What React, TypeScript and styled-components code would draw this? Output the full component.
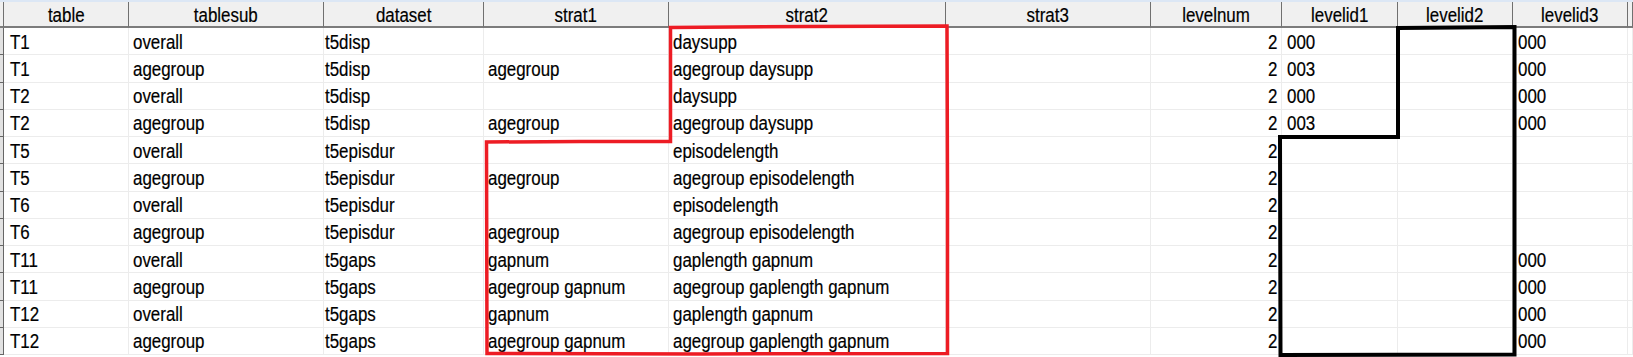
import styled, { createGlobalStyle } from "styled-components";
import { Fragment } from "react";

const GlobalStyle = createGlobalStyle`
  body {
    margin: 0;
    background: #fff;
  }
`;

const Frame = styled.div`
  position: relative;
  width: 1633px;
  height: 357px;
  overflow: hidden;
  background: #fff;
  font-family: "Liberation Sans", Arial, sans-serif;
  font-size: 20.5px;
  color: #000;
`;

const TopStrip = styled.div`
  height: 2px;
  background: #dce7f5;
`;

const Grid = styled.div`
  display: grid;
  grid-template-columns: 4px 125px 195px 160px 185px 277px 205px 131px 116px 115px 115px 1fr;
  grid-template-rows: 26px repeat(12, 27.25px);
`;

const HeaderCell = styled.div`
  box-sizing: border-box;
  background: #f0f0f0;
  border-right: 1px solid #707070;
  border-bottom: 2px solid #7c7c7c;
  padding-top: 2px;
  line-height: 22px;
  text-align: center;
  white-space: nowrap;
  overflow: hidden;
`;

const Stub = styled.div`
  box-sizing: border-box;
  background: #e2e2e2;
  border-right: 1px solid #666;
  border-bottom: 1px solid #666;
`;

const Cell = styled.div<{ $pad: number; $right?: boolean }>`
  box-sizing: border-box;
  display: flex;
  align-items: center;
  justify-content: ${(p) => (p.$right ? "flex-end" : "flex-start")};
  padding: 1px ${(p) => (p.$right ? p.$pad : 0)}px 0 ${(p) => (p.$right ? 0 : p.$pad)}px;
  border-right: 1px solid #ececec;
  border-bottom: 1px solid #ececec;
  white-space: nowrap;
  overflow: hidden;
`;

// the grid font is a narrow sans, squeeze Liberation Sans to its width
const Text = styled.span<{ $origin?: string }>`
  display: inline-block;
  transform: scaleX(0.825);
  transform-origin: ${(p) => p.$origin || "left"} center;
  -webkit-text-stroke: 0.2px #000;
`;

const Marks = styled.svg`
  position: absolute;
  left: 0;
  top: 0;
  pointer-events: none;
`;

type Col = { name: string; pad: number; right?: boolean };

const columns: Col[] = [
  { name: "table", pad: 6 },
  { name: "tablesub", pad: 4 },
  { name: "dataset", pad: 1 },
  { name: "strat1", pad: 4 },
  { name: "strat2", pad: 4 },
  { name: "strat3", pad: 4 },
  { name: "levelnum", pad: 4, right: true },
  { name: "levelid1", pad: 5 },
  { name: "levelid2", pad: 5 },
  { name: "levelid3", pad: 5 },
];

const rows: string[][] = [
  ["T1", "overall", "t5disp", "", "daysupp", "", "2", "000", "", "000"],
  ["T1", "agegroup", "t5disp", "agegroup", "agegroup daysupp", "", "2", "003", "", "000"],
  ["T2", "overall", "t5disp", "", "daysupp", "", "2", "000", "", "000"],
  ["T2", "agegroup", "t5disp", "agegroup", "agegroup daysupp", "", "2", "003", "", "000"],
  ["T5", "overall", "t5episdur", "", "episodelength", "", "2", "", "", ""],
  ["T5", "agegroup", "t5episdur", "agegroup", "agegroup episodelength", "", "2", "", "", ""],
  ["T6", "overall", "t5episdur", "", "episodelength", "", "2", "", "", ""],
  ["T6", "agegroup", "t5episdur", "agegroup", "agegroup episodelength", "", "2", "", "", ""],
  ["T11", "overall", "t5gaps", "gapnum", "gaplength gapnum", "", "2", "", "", "000"],
  ["T11", "agegroup", "t5gaps", "agegroup gapnum", "agegroup gaplength gapnum", "", "2", "", "", "000"],
  ["T12", "overall", "t5gaps", "gapnum", "gaplength gapnum", "", "2", "", "", "000"],
  ["T12", "agegroup", "t5gaps", "agegroup gapnum", "agegroup gaplength gapnum", "", "2", "", "", "000"],
];

function App() {
  return (
    <Frame>
      <GlobalStyle />
      <TopStrip />
      <Grid>
        <HeaderCell />
        {columns.map((c) => (
          <HeaderCell key={c.name}>
            <Text $origin="center">{c.name}</Text>
          </HeaderCell>
        ))}
        <HeaderCell />
        {rows.map((r, i) => (
          <Fragment key={i}>
            <Stub />
            {r.map((v, j) => (
              <Cell key={j} $pad={columns[j].pad} $right={columns[j].right}>
                {v && <Text $origin={columns[j].right ? "right" : "left"}>{v}</Text>}
              </Cell>
            ))}
            <Cell $pad={0} />
          </Fragment>
        ))}
      </Grid>
      {/* hand drawn highlight boxes */}
      <Marks width="1633" height="357">
        <path
          d="M670.5 27.5 L808 26.5 L947 26 L947.5 190 L947.5 353.5 L700 354 L487 353.5 L486.5 142 L580 141.5 L670.5 141.5 Z"
          fill="none"
          stroke="#ed1c24"
          strokeWidth="3.5"
        />
        <path
          d="M1398 28 L1514.5 27 L1514.5 354.5 L1280.5 355 L1280 137 L1398 137 Z"
          fill="none"
          stroke="#000"
          strokeWidth="4"
        />
      </Marks>
    </Frame>
  );
}

export default App;
